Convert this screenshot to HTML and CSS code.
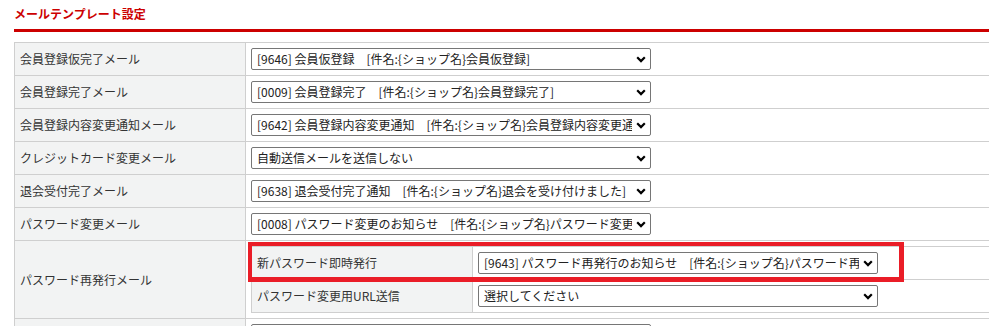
FILE: index.html
```html
<!DOCTYPE html>
<html lang="ja">
    <head>
        <meta charset="UTF-8" />
        <meta name="viewport" content="width=device-width, initial-scale=1.0" />
        <title>メールテンプレート設定</title>

        <link rel="stylesheet" href="styles.css">
    </head>
    <body>
        <div class="page">
            <h2 class="section-title">メールテンプレート設定</h2>

            <table class="mail-table">
                <tr>
                    <th>会員登録仮完了メール</th>
                    <td>
                        <select class="tpl-select">
                            <option>[9646] 会員仮登録　[件名:{ショップ名}会員仮登録]</option>
                        </select>
                    </td>
                </tr>
                <tr>
                    <th>会員登録完了メール</th>
                    <td>
                        <select class="tpl-select">
                            <option>[0009] 会員登録完了　[件名:{ショップ名}会員登録完了]</option>
                        </select>
                    </td>
                </tr>
                <tr>
                    <th>会員登録内容変更通知メール</th>
                    <td>
                        <select class="tpl-select">
                            <option>[9642] 会員登録内容変更通知　[件名:{ショップ名}会員登録内容変更通知]</option>
                        </select>
                    </td>
                </tr>
                <tr>
                    <th>クレジットカード変更メール</th>
                    <td>
                        <select class="tpl-select">
                            <option>自動送信メールを送信しない</option>
                        </select>
                    </td>
                </tr>
                <tr>
                    <th>退会受付完了メール</th>
                    <td>
                        <select class="tpl-select">
                            <option>[9638] 退会受付完了通知　[件名:{ショップ名}退会を受け付けました]</option>
                        </select>
                    </td>
                </tr>
                <tr>
                    <th>パスワード変更メール</th>
                    <td>
                        <select class="tpl-select">
                            <option>[0008] パスワード変更のお知らせ　[件名:{ショップ名}パスワード変更のお知らせ]</option>
                        </select>
                    </td>
                </tr>
                <tr>
                    <th>パスワード再発行メール</th>
                    <td>
                        <div class="sub-wrap">
                            <table class="sub-table">
                                <tr>
                                    <th>新パスワード即時発行</th>
                                    <td>
                                        <select class="tpl-select">
                                            <option>[9643] パスワード再発行のお知らせ　[件名:{ショップ名}パスワード再発行のお知らせ]</option>
                                        </select>
                                    </td>
                                </tr>
                                <tr>
                                    <th>パスワード変更用URL送信</th>
                                    <td>
                                        <select class="tpl-select">
                                            <option>選択してください</option>
                                        </select>
                                    </td>
                                </tr>
                            </table>
                            <!-- marked row -->
                            <div class="highlight"></div>
                        </div>
                    </td>
                </tr>
                <tr>
                    <th></th>
                    <td>
                        <select class="tpl-select">
                            <option></option>
                        </select>
                    </td>
                </tr>
            </table>
        </div>
    </body>
</html>
```

FILE: styles.css
```css
html,
body {
    overflow: hidden;
}

body {
    font-family: "Noto Sans CJK JP", sans-serif;
    font-size: 12px;
    color: #333;
    background-color: #fff;
    margin: 0;
}

.page {
    padding: 5px 0 0 14px;
}

.section-title {
    font-size: 12px;
    font-weight: bold;
    line-height: 18px;
    color: #c00;
    margin: 0 0 10px;
    padding-bottom: 6px;
    border-bottom: 3px solid #c00;
    width: 1000px;
}

.mail-table,
.sub-table {
    border-collapse: collapse;
    table-layout: fixed;
}

.mail-table {
    width: 1000px;
}

.sub-table {
    width: 100%;
}

.mail-table th,
.mail-table td {
    border: 1px solid #cfcfcf;
    padding: 5px;
    text-align: left;
    vertical-align: middle;
    font-weight: normal;
    line-height: 18px;
}

.mail-table > tbody > tr > td:last-child {
    border-right: none;
}

.mail-table th {
    width: 220px;
    background-color: #f2f3f3;
}

.sub-table th {
    width: 210px;
}

.sub-wrap {
    position: relative;
}

.tpl-select {
    appearance: none;
    -webkit-appearance: none;
    display: block;
    width: 400px;
    height: 22px;
    padding: 0 18px 0 5px;
    font-family: "Noto Sans CJK JP", sans-serif;
    font-size: 12px;
    line-height: 20px;
    color: #222;
    background-color: #fff;
    background-image: url("data:image/svg+xml,%3Csvg xmlns='http://www.w3.org/2000/svg' width='10' height='7' viewBox='0 0 10 7'%3E%3Cpath d='M1.2 1.3L5 5.1l3.8-3.8' fill='none' stroke='%23000' stroke-width='2.2'/%3E%3C/svg%3E");
    background-repeat: no-repeat;
    background-position: right 4px center;
    border: 1px solid #767676;
    border-radius: 2px;
}

/* red frame drawn over the first sub row */
.highlight {
    position: absolute;
    left: -3px;
    top: -4px;
    width: 656px;
    height: 40px;
    box-sizing: border-box;
    border-style: solid;
    border-color: #ea1d27;
    border-width: 4px 5px 5px 4px;
    pointer-events: none;
}
```
